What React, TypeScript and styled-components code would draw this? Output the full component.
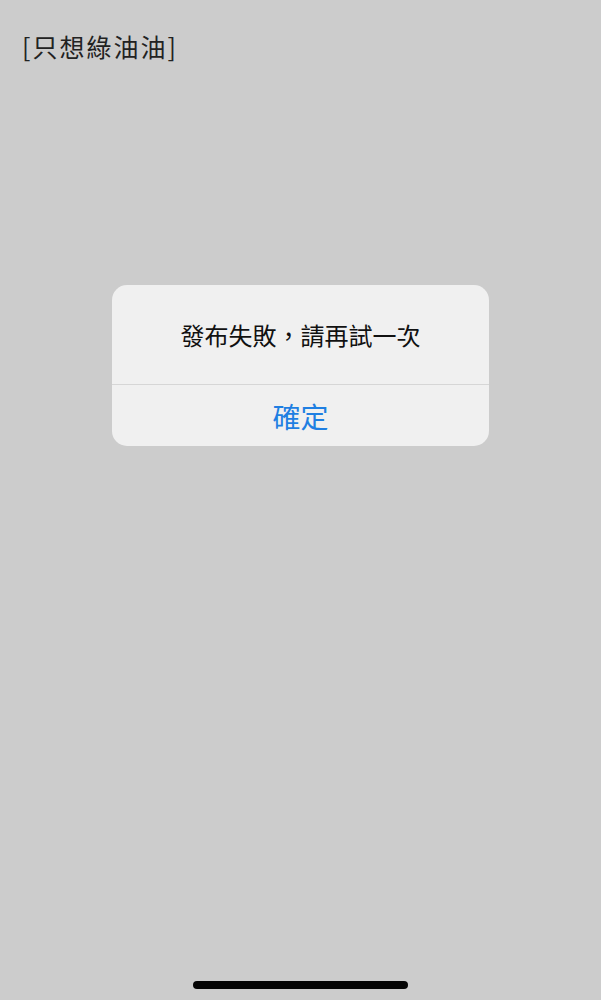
import React from "react";
import styled, { createGlobalStyle } from "styled-components";

const Global = createGlobalStyle`
  html, body { margin: 0; padding: 0; background: #cccccc; }
  body { font-family: "Noto Sans CJK TC", "Noto Sans", sans-serif; }
`;

const Page = styled.div`
  width: 601px;
  height: 1000px;
  background: #cccccc;
  display: flex;
  flex-direction: column;
  box-sizing: border-box;
  overflow: hidden;
`;

const Header = styled.div`
  padding: 27px 0 0 22px;
  font-size: 25px;
  line-height: 38px;
  height: 38px;
  color: #222222;
  letter-spacing: 2px;
`;

const Dialog = styled.div`
  margin: 220px auto 0;
  width: 377px;
  background: #f0f0f0;
  border-radius: 15px;
  overflow: hidden;
  display: flex;
  flex-direction: column;
`;

const Message = styled.div`
  height: 99px;
  display: flex;
  align-items: center;
  justify-content: center;
  font-size: 24px;
  color: #111111;
  border-bottom: 1px solid #d6d6d6;
`;

const Button = styled.div`
  height: 61px;
  display: flex;
  align-items: center;
  justify-content: center;
  font-size: 28px;
  color: #1f7fe2;
`;

const Spacer = styled.div`
  flex: 1;
`;

const HomeIndicator = styled.div`
  width: 215px;
  height: 8px;
  border-radius: 4px;
  background: #050505;
  margin: 0 auto 11px;
`;

export default function App() {
  return (
    <>
      <Global />
      <Page>
        <Header>[只想綠油油]</Header>
        <Dialog>
          <Message>發布失敗，請再試一次</Message>
          <Button>確定</Button>
        </Dialog>
        <Spacer />
        <HomeIndicator />
      </Page>
    </>
  );
}
